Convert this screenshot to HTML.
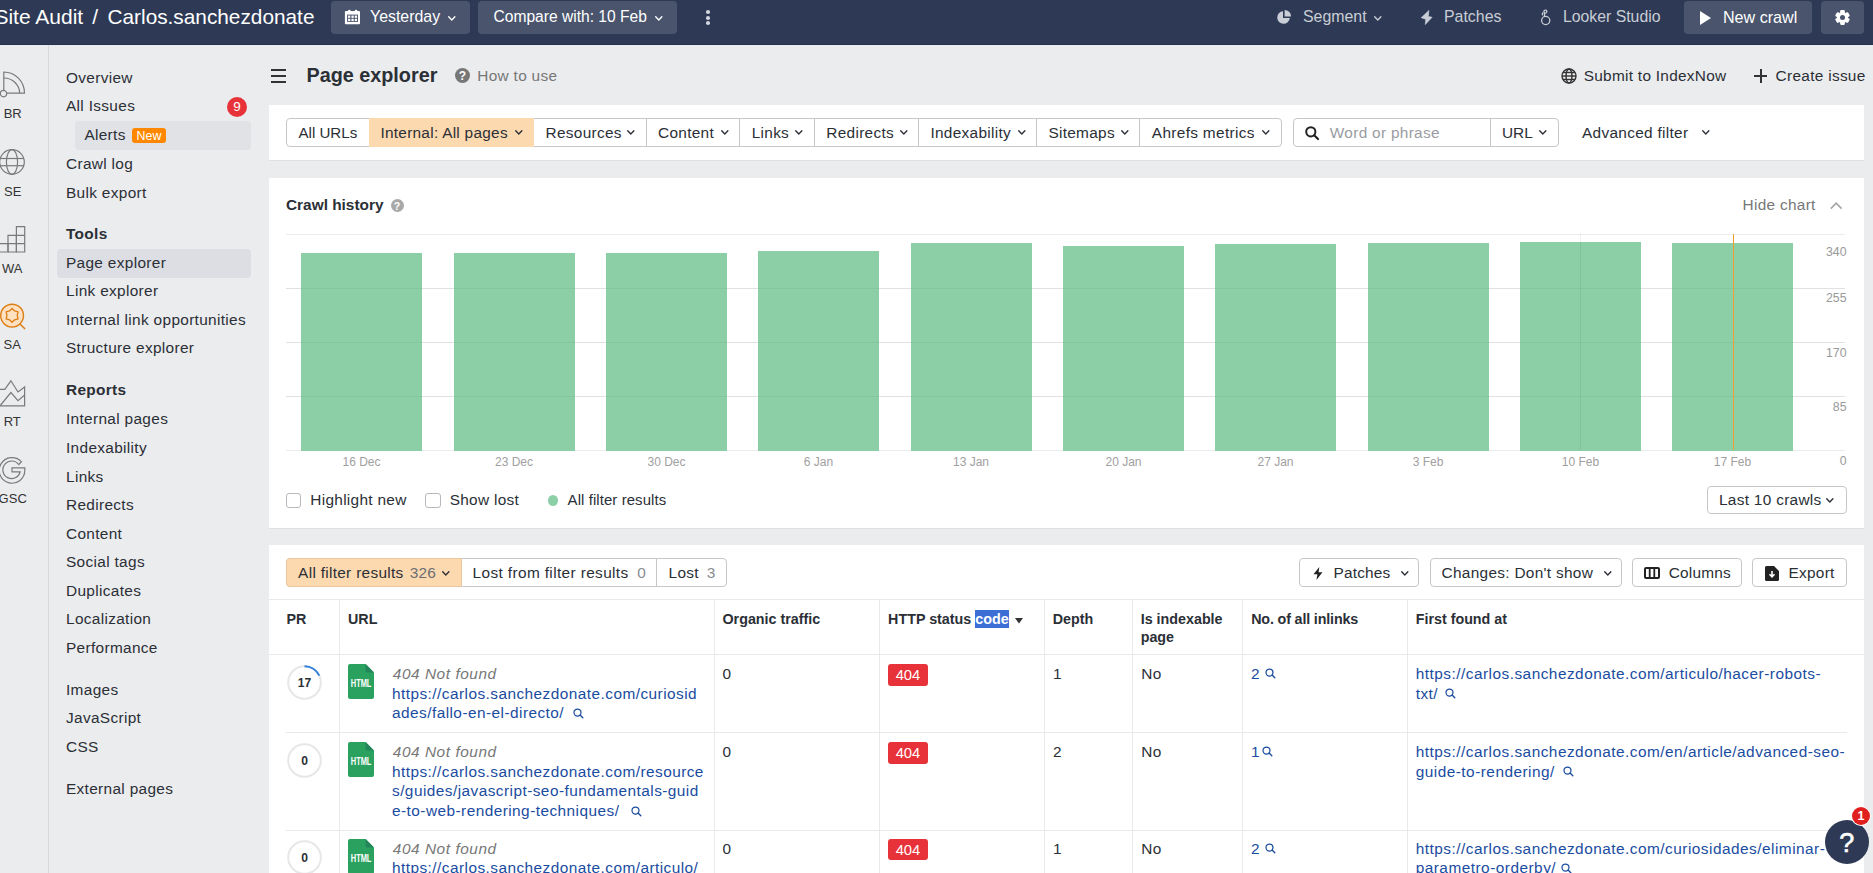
<!DOCTYPE html>
<html><head><meta charset="utf-8"><title>Page explorer</title>
<style>
html,body{margin:0;padding:0;}
body{width:1873px;height:873px;overflow:hidden;position:relative;background:#ebecee;font-family:"Liberation Sans", sans-serif;color:#333;}
.t{position:absolute;white-space:nowrap;}
.r{position:absolute;box-sizing:border-box;}
svg.r{overflow:visible;}
</style></head><body>
<div class="r" style="left:0px;top:0px;width:1873px;height:45px;background:#2e3a55;"></div>
<div class="r" style="left:0px;top:44px;width:1873px;height:1px;background:#263250;"></div>
<div class="t" style="left:-5.60px;top:7.02px;font-size:21px;line-height:20px;color:#fff;">Site Audit</div>
<div class="t" style="left:92.20px;top:7.02px;font-size:21px;line-height:20px;color:#fff;">/</div>
<div class="t" style="left:107.50px;top:7.09px;font-size:20.8px;line-height:20px;color:#fff;">Carlos.sanchezdonate</div>
<div class="r" style="left:331px;top:1px;width:139px;height:33px;background:#4a556d;border-radius:4px;"></div>
<svg class="r" style="left:344px;top:9px;" width="16" height="16" viewBox="0 0 16 16"><rect x="0.9" y="1.9" width="15.1" height="13.4" rx="1" fill="#fff"/><rect x="4.2" y="0.9" width="2.3" height="1.6" fill="#fff"/><rect x="10.9" y="0.9" width="2.3" height="1.6" fill="#fff"/><rect x="3.1" y="5.6" width="10.9" height="7.3" fill="#4a556d"/><rect x="4.05" y="6.55" width="2.3" height="2.3" fill="#fff"/><rect x="4.05" y="9.75" width="2.3" height="2.3" fill="#fff"/><rect x="7.45" y="6.55" width="2.3" height="2.3" fill="#fff"/><rect x="7.45" y="9.75" width="2.3" height="2.3" fill="#fff"/><rect x="10.75" y="6.55" width="2.3" height="2.3" fill="#fff"/><rect x="10.75" y="9.75" width="2.3" height="2.3" fill="#fff"/></svg>
<div class="t" style="left:370.00px;top:6.89px;font-size:15.9px;line-height:20px;color:#fff;">Yesterday</div>
<svg class="r" style="left:448px;top:15.5px;" width="7.6" height="4.712" viewBox="0 0 7.6 4.712"><polyline points="0.7,0.7 3.8,4.012 6.8999999999999995,0.7" fill="none" stroke="#fff" stroke-width="1.35" stroke-linecap="round" stroke-linejoin="round"/></svg>
<div class="r" style="left:478px;top:1px;width:199px;height:33px;background:#4a556d;border-radius:4px;"></div>
<div class="t" style="left:493.50px;top:6.99px;font-size:15.6px;line-height:20px;color:#fff;">Compare with: 10 Feb</div>
<svg class="r" style="left:655px;top:15.5px;" width="7.6" height="4.712" viewBox="0 0 7.6 4.712"><polyline points="0.7,0.7 3.8,4.012 6.8999999999999995,0.7" fill="none" stroke="#fff" stroke-width="1.35" stroke-linecap="round" stroke-linejoin="round"/></svg>
<div class="r" style="left:705.5px;top:9.9px;width:4.5px;height:4.0px;background:#d3d6dd;border-radius:45%;"></div>
<div class="r" style="left:705.5px;top:15.9px;width:4.5px;height:3.9999999999999982px;background:#d3d6dd;border-radius:45%;"></div>
<div class="r" style="left:705.5px;top:21.2px;width:4.5px;height:4.0px;background:#d3d6dd;border-radius:45%;"></div>
<svg class="r" style="left:1276.2px;top:10px;" width="15" height="15" viewBox="0 0 15 15"><path d="M7 1.2 A6.3 6.3 0 1 0 13.8 8 L7 8 Z" fill="#c9cdd6"/><path d="M8.6 0 A6.4 6.4 0 0 1 15 6.4 L8.6 6.4 Z" fill="#c9cdd6"/></svg>
<div class="t" style="left:1303.00px;top:6.89px;font-size:15.9px;line-height:20px;color:#c9cdd6;">Segment</div>
<svg class="r" style="left:1374px;top:15.5px;" width="7.6" height="4.712" viewBox="0 0 7.6 4.712"><polyline points="0.7,0.7 3.8,4.012 6.8999999999999995,0.7" fill="none" stroke="#c9cdd6" stroke-width="1.35" stroke-linecap="round" stroke-linejoin="round"/></svg>
<svg class="r" style="left:1421px;top:10px;" width="12" height="15" viewBox="0 0 12 15"><path d="M7.9 0.4 L0.2 7.7 L4.7 9.2 L4.3 14.6 L11.1 7.3 L7.4 6.4 Z" fill="#c9cdd6" stroke="#c9cdd6" stroke-width="0.6" stroke-linejoin="round"/></svg>
<div class="t" style="left:1444.00px;top:6.89px;font-size:15.9px;line-height:20px;color:#c9cdd6;">Patches</div>
<svg class="r" style="left:1540px;top:9px;" width="11" height="16" viewBox="0 0 11 16"><g fill="none" stroke="#c9cdd6" stroke-width="1.3"><circle cx="5.7" cy="11.5" r="4.1"/><circle cx="5.4" cy="2.6" r="1.5"/><path d="M2.9 6.3 A1.7 1.7 0 0 1 3.2 3.6"/><line x1="4.5" y1="3.9" x2="4.5" y2="7.2"/></g></svg>
<div class="t" style="left:1563.00px;top:6.93px;font-size:15.8px;line-height:20px;color:#c9cdd6;">Looker Studio</div>
<div class="r" style="left:1684px;top:1px;width:128px;height:33px;background:#4a556d;border-radius:4px;"></div>
<svg class="r" style="left:1700px;top:11px;" width="11" height="14" viewBox="0 0 11 14"><path d="M0 0 L11 7 L0 14 Z" fill="#fff"/></svg>
<div class="t" style="left:1723.00px;top:6.82px;font-size:16.1px;line-height:20px;color:#fff;">New crawl</div>
<div class="r" style="left:1821px;top:1px;width:43px;height:33px;background:#4a556d;border-radius:4px;"></div>
<svg class="r" style="left:1834px;top:9px;" width="17" height="17" viewBox="0 0 17 17"><g transform="translate(8.5,8.5) scale(0.9)" fill="#fff"><rect x="-2.6" y="-8.2" width="5.2" height="4.5" rx="1.2" transform="rotate(0)"/><rect x="-2.6" y="-8.2" width="5.2" height="4.5" rx="1.2" transform="rotate(60)"/><rect x="-2.6" y="-8.2" width="5.2" height="4.5" rx="1.2" transform="rotate(120)"/><rect x="-2.6" y="-8.2" width="5.2" height="4.5" rx="1.2" transform="rotate(180)"/><rect x="-2.6" y="-8.2" width="5.2" height="4.5" rx="1.2" transform="rotate(240)"/><rect x="-2.6" y="-8.2" width="5.2" height="4.5" rx="1.2" transform="rotate(300)"/><circle r="6.2"/></g><circle cx="8.5" cy="8.5" r="2.5" fill="#4a556d"/></svg>
<div class="r" style="left:48px;top:45px;width:1px;height:828px;background:#d8d9dc;"></div>
<svg class="r" style="left:0px;top:71px;" width="26" height="27" viewBox="0 0 26 27"><g fill="none" stroke="#7a7a7a" stroke-width="1.2"><path d="M3.8 19.5 V1 A20.7 21.3 0 0 1 24.5 22.2 H6.8"/><path d="M3.8 7 A15.9 15.2 0 0 1 19.7 22.2"/><circle cx="3.5" cy="22.6" r="3.2"/></g></svg>
<div class="t" style="left:-187.30px;width:400px;text-align:center;top:104.10px;font-size:13px;line-height:20px;color:#333;">BR</div>
<svg class="r" style="left:0px;top:149px;" width="25" height="26" viewBox="0 0 25 26"><g fill="none" stroke="#7a7a7a" stroke-width="1.2"><circle cx="12" cy="13" r="12.3"/><ellipse cx="12" cy="13" rx="5.6" ry="12.3"/><line x1="0" y1="9.5" x2="24" y2="9.5"/><line x1="0" y1="16.7" x2="24" y2="16.7"/></g></svg>
<div class="t" style="left:-187.30px;width:400px;text-align:center;top:181.50px;font-size:13px;line-height:20px;color:#333;">SE</div>
<svg class="r" style="left:0px;top:226px;" width="26" height="27" viewBox="0 0 26 27"><g fill="none" stroke="#7a7a7a" stroke-width="1.2"><path d="M-2 17.6 H8 V26 H-2"/><path d="M8 26 V9.3 H16.4 V26 H8 M8 17.6 H16.4"/><path d="M16.4 0.7 H24.7 V26 H16.4 Z M16.4 9.3 H24.7 M16.4 17.6 H24.7"/></g></svg>
<div class="t" style="left:-187.80px;width:400px;text-align:center;top:258.80px;font-size:13px;line-height:20px;color:#333;">WA</div>
<svg class="r" style="left:0px;top:303px;" width="26" height="32" viewBox="0 0 26 32"><circle cx="12.1" cy="12.6" r="11.4" fill="#fde1c0" stroke="#dc7d14" stroke-width="1.4"/><line x1="20.5" y1="21.4" x2="24.6" y2="25.6" stroke="#dc7d14" stroke-width="1.5" stroke-linecap="round"/><path d="M12.10 5.50 L14.65 7.98 L18.08 8.95 L17.20 12.40 L18.08 15.85 L14.65 16.82 L12.10 19.30 L9.55 16.82 L6.12 15.85 L7.00 12.40 L6.12 8.95 L9.55 7.98 Z" fill="none" stroke="#dc7d14" stroke-width="1.3" stroke-linejoin="round"/></svg>
<div class="t" style="left:-187.80px;width:400px;text-align:center;top:335.10px;font-size:13px;line-height:20px;color:#333;">SA</div>
<svg class="r" style="left:0px;top:380px;" width="26" height="27" viewBox="0 0 26 27"><g fill="none" stroke="#7a7a7a" stroke-width="1.2"><path d="M-2 9.3 H4.8 L10.9 0.8 L18 12 L24.6 7 V25.8 H-2"/><path d="M0 25.8 L10.9 12.5 L18 20.6 L24.6 15"/></g></svg>
<div class="t" style="left:-187.80px;width:400px;text-align:center;top:412.20px;font-size:13px;line-height:20px;color:#333;">RT</div>
<svg class="r" style="left:0px;top:457px;" width="26" height="27" viewBox="0 0 26 27"><path d="M21.5 4.8 A12.8 12.8 0 1 0 24.8 13.5 V10.8 H12 V14.9 H20.2 A8.8 8.8 0 1 1 18.7 7.5 Z" fill="none" stroke="#7a7a7a" stroke-width="1.2"/></svg>
<div class="t" style="left:-187.30px;width:400px;text-align:center;top:489.00px;font-size:13px;line-height:20px;color:#333;">GSC</div>
<div class="r" style="left:75px;top:121px;width:176px;height:29px;background:#e0e2e6;border-radius:4px;"></div>
<div class="r" style="left:57px;top:249px;width:194px;height:28.5px;background:#dcdee3;border-radius:4px;"></div>
<div class="t" style="left:66.00px;top:67.56px;font-size:15.4px;line-height:20px;color:#2b2f36;letter-spacing:0.33px;">Overview</div>
<div class="t" style="left:66.00px;top:95.96px;font-size:15.4px;line-height:20px;color:#2b2f36;letter-spacing:0.33px;">All Issues</div>
<div class="t" style="left:84.40px;top:125.46px;font-size:15.4px;line-height:20px;color:#2b2f36;letter-spacing:0.33px;">Alerts</div>
<div class="t" style="left:66.00px;top:153.56px;font-size:15.4px;line-height:20px;color:#2b2f36;letter-spacing:0.33px;">Crawl log</div>
<div class="t" style="left:66.00px;top:182.76px;font-size:15.4px;line-height:20px;color:#2b2f36;letter-spacing:0.33px;">Bulk export</div>
<div class="t" style="left:66.00px;top:224.36px;font-size:15.4px;line-height:20px;color:#2b2f36;letter-spacing:0.33px;"><b>Tools</b></div>
<div class="t" style="left:66.00px;top:252.66px;font-size:15.4px;line-height:20px;color:#2b2f36;letter-spacing:0.33px;">Page explorer</div>
<div class="t" style="left:66.00px;top:281.36px;font-size:15.4px;line-height:20px;color:#2b2f36;letter-spacing:0.33px;">Link explorer</div>
<div class="t" style="left:66.00px;top:309.66px;font-size:15.4px;line-height:20px;color:#2b2f36;letter-spacing:0.33px;">Internal link opportunities</div>
<div class="t" style="left:66.00px;top:337.96px;font-size:15.4px;line-height:20px;color:#2b2f36;letter-spacing:0.33px;">Structure explorer</div>
<div class="t" style="left:66.00px;top:380.36px;font-size:15.4px;line-height:20px;color:#2b2f36;letter-spacing:0.33px;"><b>Reports</b></div>
<div class="t" style="left:66.00px;top:408.76px;font-size:15.4px;line-height:20px;color:#2b2f36;letter-spacing:0.33px;">Internal pages</div>
<div class="t" style="left:66.00px;top:437.66px;font-size:15.4px;line-height:20px;color:#2b2f36;letter-spacing:0.33px;">Indexability</div>
<div class="t" style="left:66.00px;top:466.56px;font-size:15.4px;line-height:20px;color:#2b2f36;letter-spacing:0.33px;">Links</div>
<div class="t" style="left:66.00px;top:494.66px;font-size:15.4px;line-height:20px;color:#2b2f36;letter-spacing:0.33px;">Redirects</div>
<div class="t" style="left:66.00px;top:523.56px;font-size:15.4px;line-height:20px;color:#2b2f36;letter-spacing:0.33px;">Content</div>
<div class="t" style="left:66.00px;top:551.96px;font-size:15.4px;line-height:20px;color:#2b2f36;letter-spacing:0.33px;">Social tags</div>
<div class="t" style="left:66.00px;top:580.56px;font-size:15.4px;line-height:20px;color:#2b2f36;letter-spacing:0.33px;">Duplicates</div>
<div class="t" style="left:66.00px;top:609.16px;font-size:15.4px;line-height:20px;color:#2b2f36;letter-spacing:0.33px;">Localization</div>
<div class="t" style="left:66.00px;top:637.76px;font-size:15.4px;line-height:20px;color:#2b2f36;letter-spacing:0.33px;">Performance</div>
<div class="t" style="left:66.00px;top:679.56px;font-size:15.4px;line-height:20px;color:#2b2f36;letter-spacing:0.33px;">Images</div>
<div class="t" style="left:66.00px;top:708.16px;font-size:15.4px;line-height:20px;color:#2b2f36;letter-spacing:0.33px;">JavaScript</div>
<div class="t" style="left:66.00px;top:736.76px;font-size:15.4px;line-height:20px;color:#2b2f36;letter-spacing:0.33px;">CSS</div>
<div class="t" style="left:66.00px;top:778.66px;font-size:15.4px;line-height:20px;color:#2b2f36;letter-spacing:0.33px;">External pages</div>
<div class="r" style="left:227px;top:97px;width:20px;height:20px;background:#e8323a;border-radius:50%;"></div>
<div class="t" style="left:37.00px;width:400px;text-align:center;top:96.82px;font-size:13.5px;line-height:20px;color:#fff;">9</div>
<div class="r" style="left:132px;top:128px;width:34px;height:15px;background:#ff8800;border-radius:3px;"></div>
<div class="t" style="left:-51.00px;width:400px;text-align:center;top:125.70px;font-size:12.4px;line-height:20px;color:#fff;">New</div>
<div class="r" style="left:271px;top:68.5px;width:15px;height:2.5px;background:#333;"></div>
<div class="r" style="left:271px;top:74.5px;width:15px;height:2.5px;background:#333;"></div>
<div class="r" style="left:271px;top:80.5px;width:15px;height:2.5px;background:#333;"></div>
<div class="t" style="left:306.50px;top:65.44px;font-size:19.8px;line-height:20px;color:#2b2f36;font-weight:700;">Page explorer</div>
<div class="r" style="left:455px;top:68px;width:15px;height:15px;background:#777;border-radius:50%;"></div>
<div class="t" style="left:262.50px;width:400px;text-align:center;top:66.34px;font-size:12px;line-height:20px;color:#fff;font-weight:700;">?</div>
<div class="t" style="left:477.30px;top:65.76px;font-size:15.4px;line-height:20px;color:#777;letter-spacing:0.3px;">How to use</div>
<svg class="r" style="left:1561px;top:68px;" width="16" height="16" viewBox="0 0 16 16"><g fill="none" stroke="#333" stroke-width="1.4"><circle cx="8" cy="8" r="7"/><ellipse cx="8" cy="8" rx="3" ry="7"/><line x1="1" y1="8" x2="15" y2="8"/><line x1="2" y1="4.5" x2="14" y2="4.5"/><line x1="2" y1="11.5" x2="14" y2="11.5"/></g></svg>
<div class="t" style="left:1583.70px;top:66.16px;font-size:15.4px;line-height:20px;color:#2b2f36;letter-spacing:0.28px;">Submit to IndexNow</div>
<div class="r" style="left:1754px;top:74.8px;width:13.299999999999955px;height:2.0px;background:#333;"></div>
<div class="r" style="left:1759.7px;top:69px;width:2.0px;height:13.5px;background:#333;"></div>
<div class="t" style="left:1775.60px;top:66.16px;font-size:15.4px;line-height:20px;color:#2b2f36;letter-spacing:0.3px;">Create issue</div>
<div class="r" style="left:269px;top:105px;width:1595px;height:55px;background:#fff;box-shadow:0 1px 0 #dfe0e3;"></div>
<div class="r" style="left:286px;top:118px;width:996px;height:29px;border:1px solid #c6c7ca;border-radius:4px;background:#fff;"></div>
<div class="r" style="left:368.5px;top:118px;width:165.20000000000005px;height:29px;background:#fdd9b0;"></div>
<div class="r" style="left:645.6px;top:118px;width:1.0px;height:29px;background:#c6c7ca;"></div>
<div class="r" style="left:739px;top:118px;width:1px;height:29px;background:#c6c7ca;"></div>
<div class="r" style="left:814px;top:118px;width:1px;height:29px;background:#c6c7ca;"></div>
<div class="r" style="left:918px;top:118px;width:1px;height:29px;background:#c6c7ca;"></div>
<div class="r" style="left:1036px;top:118px;width:1px;height:29px;background:#c6c7ca;"></div>
<div class="r" style="left:1139px;top:118px;width:1px;height:29px;background:#c6c7ca;"></div>
<div class="t" style="left:298.50px;top:123.17px;font-size:15.1px;line-height:20px;color:#2b2f36;">All URLs</div>
<div class="t" style="left:380.40px;top:123.06px;font-size:15.4px;line-height:20px;color:#2b2f36;letter-spacing:0.27px;">Internal: All pages</div>
<svg class="r" style="left:515px;top:130.3px;" width="7.6" height="4.712" viewBox="0 0 7.6 4.712"><polyline points="0.7,0.7 3.8,4.012 6.8999999999999995,0.7" fill="none" stroke="#2b2f36" stroke-width="1.35" stroke-linecap="round" stroke-linejoin="round"/></svg>
<div class="t" style="left:545.60px;top:123.06px;font-size:15.4px;line-height:20px;color:#2b2f36;letter-spacing:0.3px;">Resources</div>
<svg class="r" style="left:627px;top:130.3px;" width="7.6" height="4.712" viewBox="0 0 7.6 4.712"><polyline points="0.7,0.7 3.8,4.012 6.8999999999999995,0.7" fill="none" stroke="#2b2f36" stroke-width="1.35" stroke-linecap="round" stroke-linejoin="round"/></svg>
<div class="t" style="left:658.00px;top:123.06px;font-size:15.4px;line-height:20px;color:#2b2f36;letter-spacing:0.3px;">Content</div>
<svg class="r" style="left:721px;top:130.3px;" width="7.6" height="4.712" viewBox="0 0 7.6 4.712"><polyline points="0.7,0.7 3.8,4.012 6.8999999999999995,0.7" fill="none" stroke="#2b2f36" stroke-width="1.35" stroke-linecap="round" stroke-linejoin="round"/></svg>
<div class="t" style="left:751.70px;top:123.06px;font-size:15.4px;line-height:20px;color:#2b2f36;letter-spacing:0.3px;">Links</div>
<svg class="r" style="left:795px;top:130.3px;" width="7.6" height="4.712" viewBox="0 0 7.6 4.712"><polyline points="0.7,0.7 3.8,4.012 6.8999999999999995,0.7" fill="none" stroke="#2b2f36" stroke-width="1.35" stroke-linecap="round" stroke-linejoin="round"/></svg>
<div class="t" style="left:826.30px;top:123.06px;font-size:15.4px;line-height:20px;color:#2b2f36;letter-spacing:0.3px;">Redirects</div>
<svg class="r" style="left:899.5px;top:130.3px;" width="7.6" height="4.712" viewBox="0 0 7.6 4.712"><polyline points="0.7,0.7 3.8,4.012 6.8999999999999995,0.7" fill="none" stroke="#2b2f36" stroke-width="1.35" stroke-linecap="round" stroke-linejoin="round"/></svg>
<div class="t" style="left:930.40px;top:123.06px;font-size:15.4px;line-height:20px;color:#2b2f36;letter-spacing:0.3px;">Indexability</div>
<svg class="r" style="left:1018px;top:130.3px;" width="7.6" height="4.712" viewBox="0 0 7.6 4.712"><polyline points="0.7,0.7 3.8,4.012 6.8999999999999995,0.7" fill="none" stroke="#2b2f36" stroke-width="1.35" stroke-linecap="round" stroke-linejoin="round"/></svg>
<div class="t" style="left:1048.40px;top:123.06px;font-size:15.4px;line-height:20px;color:#2b2f36;letter-spacing:0.3px;">Sitemaps</div>
<svg class="r" style="left:1121px;top:130.3px;" width="7.6" height="4.712" viewBox="0 0 7.6 4.712"><polyline points="0.7,0.7 3.8,4.012 6.8999999999999995,0.7" fill="none" stroke="#2b2f36" stroke-width="1.35" stroke-linecap="round" stroke-linejoin="round"/></svg>
<div class="t" style="left:1151.80px;top:123.06px;font-size:15.4px;line-height:20px;color:#2b2f36;letter-spacing:0.33px;">Ahrefs metrics</div>
<svg class="r" style="left:1262px;top:130.3px;" width="7.6" height="4.712" viewBox="0 0 7.6 4.712"><polyline points="0.7,0.7 3.8,4.012 6.8999999999999995,0.7" fill="none" stroke="#2b2f36" stroke-width="1.35" stroke-linecap="round" stroke-linejoin="round"/></svg>
<div class="r" style="left:1293px;top:118px;width:266px;height:29px;border:1px solid #c6c7ca;border-radius:4px;background:#fff;"></div>
<div class="r" style="left:1490px;top:118px;width:1px;height:29px;background:#c6c7ca;"></div>
<svg class="r" style="left:1305px;top:126px;" width="14" height="14" viewBox="0 0 14 14"><circle cx="5.8" cy="5.8" r="4.6" fill="none" stroke="#222" stroke-width="2"/><line x1="9.2" y1="9.2" x2="13" y2="13" stroke="#222" stroke-width="2.2" stroke-linecap="round"/></svg>
<div class="t" style="left:1329.80px;top:123.06px;font-size:15.4px;line-height:20px;color:#9a9ca1;letter-spacing:0.3px;">Word or phrase</div>
<div class="t" style="left:1502.00px;top:123.06px;font-size:15.4px;line-height:20px;color:#2b2f36;">URL</div>
<svg class="r" style="left:1539px;top:130.3px;" width="7.6" height="4.712" viewBox="0 0 7.6 4.712"><polyline points="0.7,0.7 3.8,4.012 6.8999999999999995,0.7" fill="none" stroke="#2b2f36" stroke-width="1.35" stroke-linecap="round" stroke-linejoin="round"/></svg>
<div class="t" style="left:1582.00px;top:123.06px;font-size:15.4px;line-height:20px;color:#2b2f36;letter-spacing:0.3px;">Advanced filter</div>
<svg class="r" style="left:1701.5px;top:130.3px;" width="7.6" height="4.712" viewBox="0 0 7.6 4.712"><polyline points="0.7,0.7 3.8,4.012 6.8999999999999995,0.7" fill="none" stroke="#2b2f36" stroke-width="1.35" stroke-linecap="round" stroke-linejoin="round"/></svg>
<div class="r" style="left:269px;top:178px;width:1595px;height:350px;background:#fff;box-shadow:0 1px 0 #dfe0e3;"></div>
<div class="t" style="left:286.00px;top:194.96px;font-size:15.4px;line-height:20px;color:#2b2f36;font-weight:700;">Crawl history</div>
<div class="r" style="left:390.5px;top:198.8px;width:13.0px;height:13.0px;background:#a8a8a8;border-radius:50%;"></div>
<div class="t" style="left:197.00px;width:400px;text-align:center;top:195.66px;font-size:10.5px;line-height:20px;color:#fff;font-weight:700;">?</div>
<div class="t" style="right:57.30px;top:194.96px;font-size:15.4px;line-height:20px;color:#777;letter-spacing:0.3px;">Hide chart</div>
<svg class="r" style="left:1830.4px;top:201.5px;" width="12.4" height="7.2" viewBox="0 0 12.4 7.2"><polyline points="0.8,6.6 6.2,1.2 11.6,6.6" fill="none" stroke="#a5a5a5" stroke-width="1.6"/></svg>
<div class="r" style="left:286px;top:234px;width:1559px;height:1px;background:#ececec;"></div>
<div class="r" style="left:286px;top:288px;width:1559px;height:1px;background:#ececec;"></div>
<div class="r" style="left:286px;top:342px;width:1559px;height:1px;background:#ececec;"></div>
<div class="r" style="left:286px;top:396px;width:1559px;height:1px;background:#ececec;"></div>
<div class="r" style="left:286px;top:450px;width:1559px;height:1px;background:#ececec;"></div>
<div class="r" style="left:301px;top:253px;width:121px;height:198px;background:#8ccfa7;"></div>
<div class="r" style="left:453.5px;top:252.5px;width:121.0px;height:198.5px;background:#8ccfa7;"></div>
<div class="r" style="left:606px;top:252.5px;width:121px;height:198.5px;background:#8ccfa7;"></div>
<div class="r" style="left:758px;top:251.2px;width:121px;height:199.8px;background:#8ccfa7;"></div>
<div class="r" style="left:910.5px;top:243px;width:121.0px;height:208px;background:#8ccfa7;"></div>
<div class="r" style="left:1063px;top:246px;width:121px;height:205px;background:#8ccfa7;"></div>
<div class="r" style="left:1215px;top:244px;width:121px;height:207px;background:#8ccfa7;"></div>
<div class="r" style="left:1367.5px;top:243px;width:121.0px;height:208px;background:#8ccfa7;"></div>
<div class="r" style="left:1520px;top:242.2px;width:121px;height:208.8px;background:#8ccfa7;"></div>
<div class="r" style="left:1672px;top:243px;width:121px;height:208px;background:#8ccfa7;"></div>
<div class="r" style="left:286px;top:288px;width:1559px;height:1px;background:rgba(0,0,0,0.045);"></div>
<div class="r" style="left:286px;top:342px;width:1559px;height:1px;background:rgba(0,0,0,0.045);"></div>
<div class="r" style="left:286px;top:396px;width:1559px;height:1px;background:rgba(0,0,0,0.045);"></div>
<div class="r" style="left:1580px;top:234px;width:1px;height:216px;background:rgba(0,0,0,0.06);"></div>
<div class="r" style="left:1732.5px;top:234px;width:1.5px;height:216px;background:#f0a030;"></div>
<div class="t" style="left:161.50px;width:400px;text-align:center;top:451.84px;font-size:12px;line-height:20px;color:#a0a0a0;">16 Dec</div>
<div class="t" style="left:314.00px;width:400px;text-align:center;top:451.84px;font-size:12px;line-height:20px;color:#a0a0a0;">23 Dec</div>
<div class="t" style="left:466.50px;width:400px;text-align:center;top:451.84px;font-size:12px;line-height:20px;color:#a0a0a0;">30 Dec</div>
<div class="t" style="left:618.50px;width:400px;text-align:center;top:451.84px;font-size:12px;line-height:20px;color:#a0a0a0;">6 Jan</div>
<div class="t" style="left:771.00px;width:400px;text-align:center;top:451.84px;font-size:12px;line-height:20px;color:#a0a0a0;">13 Jan</div>
<div class="t" style="left:923.50px;width:400px;text-align:center;top:451.84px;font-size:12px;line-height:20px;color:#a0a0a0;">20 Jan</div>
<div class="t" style="left:1075.50px;width:400px;text-align:center;top:451.84px;font-size:12px;line-height:20px;color:#a0a0a0;">27 Jan</div>
<div class="t" style="left:1228.00px;width:400px;text-align:center;top:451.84px;font-size:12px;line-height:20px;color:#a0a0a0;">3 Feb</div>
<div class="t" style="left:1380.50px;width:400px;text-align:center;top:451.84px;font-size:12px;line-height:20px;color:#a0a0a0;">10 Feb</div>
<div class="t" style="left:1532.50px;width:400px;text-align:center;top:451.84px;font-size:12px;line-height:20px;color:#a0a0a0;">17 Feb</div>
<div class="t" style="right:26.50px;top:241.74px;font-size:12.3px;line-height:20px;color:#999;">340</div>
<div class="t" style="right:26.50px;top:287.74px;font-size:12.3px;line-height:20px;color:#999;">255</div>
<div class="t" style="right:26.50px;top:342.74px;font-size:12.3px;line-height:20px;color:#999;">170</div>
<div class="t" style="right:26.50px;top:396.74px;font-size:12.3px;line-height:20px;color:#999;">85</div>
<div class="t" style="right:26.50px;top:451.24px;font-size:12.3px;line-height:20px;color:#999;">0</div>
<div class="r" style="left:286px;top:492.5px;width:15px;height:15.0px;border:1px solid #b5b8bd;border-radius:3px;background:#fff;"></div>
<div class="t" style="left:310.30px;top:489.66px;font-size:15.4px;line-height:20px;color:#2b2f36;letter-spacing:0.3px;">Highlight new</div>
<div class="r" style="left:425px;top:492.5px;width:15.5px;height:15.0px;border:1px solid #b5b8bd;border-radius:3px;background:#fff;"></div>
<div class="t" style="left:449.70px;top:489.66px;font-size:15.4px;line-height:20px;color:#2b2f36;letter-spacing:0.3px;">Show lost</div>
<div class="r" style="left:548px;top:495px;width:10px;height:10.5px;background:#8ccfa7;border-radius:50%;"></div>
<div class="t" style="left:567.60px;top:489.84px;font-size:14.9px;line-height:20px;color:#2b2f36;letter-spacing:0.1px;">All filter results</div>
<div class="r" style="left:1707px;top:486px;width:140px;height:28px;border:1px solid #c6c7ca;border-radius:4px;background:#fff;"></div>
<div class="t" style="left:1719.00px;top:489.66px;font-size:15.4px;line-height:20px;color:#2b2f36;letter-spacing:0.3px;">Last 10 crawls</div>
<svg class="r" style="left:1826px;top:497.5px;" width="7.6" height="4.712" viewBox="0 0 7.6 4.712"><polyline points="0.7,0.7 3.8,4.012 6.8999999999999995,0.7" fill="none" stroke="#2b2f36" stroke-width="1.35" stroke-linecap="round" stroke-linejoin="round"/></svg>
<div class="r" style="left:269px;top:545px;width:1595px;height:328px;background:#fff;"></div>
<div class="r" style="left:286px;top:558px;width:441px;height:29px;border:1px solid #c6c7ca;border-radius:4px;background:#fff;"></div>
<div class="r" style="left:286px;top:558px;width:176px;height:29px;background:#fdd9b0;border-radius:4px 0 0 4px;border:1px solid #ebc79f;"></div>
<div class="r" style="left:656px;top:558px;width:1px;height:29px;background:#c6c7ca;"></div>
<div class="t" style="left:298.10px;top:562.96px;font-size:15.4px;line-height:20px;color:#2b2f36;letter-spacing:0.3px;">All filter results</div>
<div class="t" style="left:409.70px;top:562.96px;font-size:15.4px;line-height:20px;color:#6b6e73;letter-spacing:0.2px;">326</div>
<svg class="r" style="left:442px;top:570.5px;" width="7.6" height="4.712" viewBox="0 0 7.6 4.712"><polyline points="0.7,0.7 3.8,4.012 6.8999999999999995,0.7" fill="none" stroke="#2b2f36" stroke-width="1.35" stroke-linecap="round" stroke-linejoin="round"/></svg>
<div class="t" style="left:472.60px;top:562.96px;font-size:15.4px;line-height:20px;color:#2b2f36;letter-spacing:0.37px;">Lost from filter results</div>
<div class="t" style="left:637.20px;top:562.96px;font-size:15.4px;line-height:20px;color:#8a8d92;">0</div>
<div class="t" style="left:668.60px;top:562.96px;font-size:15.4px;line-height:20px;color:#2b2f36;letter-spacing:0.3px;">Lost</div>
<div class="t" style="left:706.80px;top:562.96px;font-size:15.4px;line-height:20px;color:#8a8d92;">3</div>
<div class="r" style="left:1299.3px;top:558px;width:120.20000000000005px;height:29px;border:1px solid #c6c7ca;border-radius:4px;"></div>
<svg class="r" style="left:1313px;top:566.5px;" width="10" height="13" viewBox="0 0 10 13"><path d="M6.3 0 L0.5 7.3 L4.4 7.3 L3.4 13 L9.5 5.3 L5.6 5.3 Z" fill="#222"/></svg>
<div class="t" style="left:1333.60px;top:562.96px;font-size:15.4px;line-height:20px;color:#2b2f36;letter-spacing:0.15px;">Patches</div>
<svg class="r" style="left:1400.5px;top:570.5px;" width="7.6" height="4.712" viewBox="0 0 7.6 4.712"><polyline points="0.7,0.7 3.8,4.012 6.8999999999999995,0.7" fill="none" stroke="#2b2f36" stroke-width="1.35" stroke-linecap="round" stroke-linejoin="round"/></svg>
<div class="r" style="left:1429.5px;top:558px;width:192.9000000000001px;height:29px;border:1px solid #c6c7ca;border-radius:4px;"></div>
<div class="t" style="left:1441.60px;top:562.96px;font-size:15.4px;line-height:20px;color:#2b2f36;letter-spacing:0.3px;">Changes: Don&#39;t show</div>
<svg class="r" style="left:1603.5px;top:570.5px;" width="7.6" height="4.712" viewBox="0 0 7.6 4.712"><polyline points="0.7,0.7 3.8,4.012 6.8999999999999995,0.7" fill="none" stroke="#2b2f36" stroke-width="1.35" stroke-linecap="round" stroke-linejoin="round"/></svg>
<div class="r" style="left:1632.4px;top:558px;width:109.89999999999986px;height:29px;border:1px solid #c6c7ca;border-radius:4px;"></div>
<svg class="r" style="left:1644px;top:567px;" width="16" height="12" viewBox="0 0 16 12"><rect x="1" y="1" width="14" height="10" rx="1" fill="none" stroke="#222" stroke-width="2"/><line x1="5.7" y1="1" x2="5.7" y2="11" stroke="#222" stroke-width="1.8"/><line x1="10.3" y1="1" x2="10.3" y2="11" stroke="#222" stroke-width="1.8"/></svg>
<div class="t" style="left:1668.80px;top:562.96px;font-size:15.4px;line-height:20px;color:#2b2f36;letter-spacing:0.2px;">Columns</div>
<div class="r" style="left:1752.3px;top:558px;width:94.29999999999995px;height:29px;border:1px solid #c6c7ca;border-radius:4px;"></div>
<svg class="r" style="left:1765px;top:565.5px;" width="14" height="15" viewBox="0 0 14 15"><path d="M1.5 0 H9 L14 5 V13.5 A1.5 1.5 0 0 1 12.5 15 H1.5 A1.5 1.5 0 0 1 0 13.5 V1.5 A1.5 1.5 0 0 1 1.5 0 Z" fill="#222"/><path d="M7 5 V10.5 M4.5 8.3 L7 10.8 L9.5 8.3" fill="none" stroke="#fff" stroke-width="1.6"/></svg>
<div class="t" style="left:1788.60px;top:562.96px;font-size:15.4px;line-height:20px;color:#2b2f36;letter-spacing:0.25px;">Export</div>
<div class="r" style="left:269px;top:599px;width:1595px;height:1px;background:#e8e9eb;"></div>
<div class="r" style="left:269px;top:654px;width:1595px;height:1px;background:#e8e9eb;"></div>
<div class="r" style="left:286px;top:732px;width:1561px;height:1px;background:#e8e9eb;"></div>
<div class="r" style="left:286px;top:830px;width:1561px;height:1px;background:#e8e9eb;"></div>
<div class="r" style="left:339px;top:600px;width:1px;height:273px;background:#e8e9eb;"></div>
<div class="r" style="left:714px;top:600px;width:1px;height:273px;background:#e8e9eb;"></div>
<div class="r" style="left:879px;top:600px;width:1px;height:273px;background:#e8e9eb;"></div>
<div class="r" style="left:1044px;top:600px;width:1px;height:273px;background:#e8e9eb;"></div>
<div class="r" style="left:1132px;top:600px;width:1px;height:273px;background:#e8e9eb;"></div>
<div class="r" style="left:1242px;top:600px;width:1px;height:273px;background:#e8e9eb;"></div>
<div class="r" style="left:1407px;top:600px;width:1px;height:273px;background:#e8e9eb;"></div>
<div class="t" style="left:286.50px;top:609.35px;font-size:14.3px;line-height:20px;color:#2b2f36;font-weight:700;">PR</div>
<div class="t" style="left:348.00px;top:609.35px;font-size:14.3px;line-height:20px;color:#2b2f36;font-weight:700;">URL</div>
<div class="t" style="left:722.50px;top:609.35px;font-size:14.3px;line-height:20px;color:#2b2f36;font-weight:700;">Organic traffic</div>
<div class="r" style="left:975.2px;top:610px;width:33.799999999999955px;height:18px;background:#3b6fd6;"></div>
<div class="t" style="left:888.10px;top:609.35px;font-size:14.3px;line-height:20px;color:#2b2f36;font-weight:700;">HTTP status <span style="color:#fff">code</span></div>
<svg class="r" style="left:1014.5px;top:618px;" width="8" height="5.5" viewBox="0 0 8 5.5"><path d="M0 0 H8 L4 5.5 Z" fill="#333"/></svg>
<div class="t" style="left:1052.80px;top:609.35px;font-size:14.3px;line-height:20px;color:#2b2f36;font-weight:700;">Depth</div>
<div class="t" style="left:1140.70px;top:609.35px;font-size:14.3px;line-height:20px;color:#2b2f36;font-weight:700;">Is indexable</div>
<div class="t" style="left:1140.70px;top:626.65px;font-size:14.3px;line-height:20px;color:#2b2f36;font-weight:700;">page</div>
<div class="t" style="left:1251.20px;top:609.35px;font-size:14.3px;line-height:20px;color:#2b2f36;font-weight:700;letter-spacing:-0.15px;">No. of all inlinks</div>
<div class="t" style="left:1415.70px;top:609.35px;font-size:14.3px;line-height:20px;color:#2b2f36;font-weight:700;">First found at</div>
<svg class="r" style="left:287px;top:665.2px;" width="35" height="35" viewBox="0 0 35 35"><circle cx="17.5" cy="17.5" r="16.3" fill="none" stroke="#e6e7e9" stroke-width="2"/><path d="M17.5 1.2 A16.3 16.3 0 0 1 32.3 10.6" fill="none" stroke="#2f80d8" stroke-width="2"/></svg>
<div class="t" style="left:104.60px;width:400px;text-align:center;top:673.11px;font-size:12.1px;line-height:20px;color:#2b2f36;font-weight:700;">17</div>
<svg class="r" style="left:348px;top:664.2px;" width="26" height="35" viewBox="0 0 26 35"><path d="M2 0 H17.6 L26 8.4 V33 A2 2 0 0 1 24 35 H2 A2 2 0 0 1 0 33 V2 A2 2 0 0 1 2 0 Z" fill="#2ba160"/><path d="M17.6 0 L26 8.4 H19.2 A1.6 1.6 0 0 1 17.6 6.8 Z" fill="#23855a"/><text x="2.8" y="23.3" font-family="Liberation Sans" font-weight="700" font-size="10.8" fill="#fff" textLength="20.6" lengthAdjust="spacingAndGlyphs">HTML</text></svg>
<div class="t" style="left:392.80px;top:663.76px;font-size:15.4px;line-height:20px;color:#777;letter-spacing:0.55px;font-style:italic;">404 Not found</div>
<div class="t" style="left:392.00px;top:683.56px;font-size:15.4px;line-height:20px;color:#1a4c9f;letter-spacing:0.45px;">https://carlos.sanchezdonate.com/curiosid</div>
<div class="t" style="left:392.00px;top:703.36px;font-size:15.4px;line-height:20px;color:#1a4c9f;letter-spacing:0.45px;">ades/fallo-en-el-directo/</div>
<svg class="r" style="left:573.3px;top:708.0px;" width="11" height="11" viewBox="0 0 11 11"><circle cx="4.5" cy="4.5" r="3.5" fill="none" stroke="#1a4c9f" stroke-width="1.25"/><line x1="7.1" y1="7.1" x2="9.8" y2="9.8" stroke="#1a4c9f" stroke-width="1.4" stroke-linecap="round"/></svg>
<div class="t" style="left:722.50px;top:663.76px;font-size:15.4px;line-height:20px;color:#2b2f36;">0</div>
<div class="r" style="left:888px;top:664.2px;width:40px;height:21.399999999999977px;background:#e8323a;border-radius:3px;"></div>
<div class="t" style="left:708.00px;width:400px;text-align:center;top:664.67px;font-size:14.8px;line-height:20px;color:#fff;">404</div>
<div class="t" style="left:1052.90px;top:663.76px;font-size:15.4px;line-height:20px;color:#2b2f36;">1</div>
<div class="t" style="left:1141.30px;top:663.76px;font-size:15.4px;line-height:20px;color:#2b2f36;letter-spacing:0.3px;">No</div>
<div class="t" style="left:1251.00px;top:663.76px;font-size:15.4px;line-height:20px;color:#1a4c9f;">2</div>
<svg class="r" style="left:1265.3px;top:668.4px;" width="11" height="11" viewBox="0 0 11 11"><circle cx="4.5" cy="4.5" r="3.5" fill="none" stroke="#1a4c9f" stroke-width="1.25"/><line x1="7.1" y1="7.1" x2="9.8" y2="9.8" stroke="#1a4c9f" stroke-width="1.4" stroke-linecap="round"/></svg>
<div class="t" style="left:1415.70px;top:663.76px;font-size:15.4px;line-height:20px;color:#1a4c9f;letter-spacing:0.48px;">https://carlos.sanchezdonate.com/articulo/hacer-robots-</div>
<div class="t" style="left:1415.70px;top:683.56px;font-size:15.4px;line-height:20px;color:#1a4c9f;letter-spacing:0.48px;">txt/</div>
<svg class="r" style="left:1445px;top:688.1999999999999px;" width="11" height="11" viewBox="0 0 11 11"><circle cx="4.5" cy="4.5" r="3.5" fill="none" stroke="#1a4c9f" stroke-width="1.25"/><line x1="7.1" y1="7.1" x2="9.8" y2="9.8" stroke="#1a4c9f" stroke-width="1.4" stroke-linecap="round"/></svg>
<svg class="r" style="left:287px;top:743.2px;" width="35" height="35" viewBox="0 0 35 35"><circle cx="17.5" cy="17.5" r="16.3" fill="none" stroke="#e6e7e9" stroke-width="2"/></svg>
<div class="t" style="left:104.60px;width:400px;text-align:center;top:751.11px;font-size:12.1px;line-height:20px;color:#2b2f36;font-weight:700;">0</div>
<svg class="r" style="left:348px;top:742.2px;" width="26" height="35" viewBox="0 0 26 35"><path d="M2 0 H17.6 L26 8.4 V33 A2 2 0 0 1 24 35 H2 A2 2 0 0 1 0 33 V2 A2 2 0 0 1 2 0 Z" fill="#2ba160"/><path d="M17.6 0 L26 8.4 H19.2 A1.6 1.6 0 0 1 17.6 6.8 Z" fill="#23855a"/><text x="2.8" y="23.3" font-family="Liberation Sans" font-weight="700" font-size="10.8" fill="#fff" textLength="20.6" lengthAdjust="spacingAndGlyphs">HTML</text></svg>
<div class="t" style="left:392.80px;top:741.76px;font-size:15.4px;line-height:20px;color:#777;letter-spacing:0.55px;font-style:italic;">404 Not found</div>
<div class="t" style="left:392.00px;top:761.56px;font-size:15.4px;line-height:20px;color:#1a4c9f;letter-spacing:0.45px;">https://carlos.sanchezdonate.com/resource</div>
<div class="t" style="left:392.00px;top:781.36px;font-size:15.4px;line-height:20px;color:#1a4c9f;letter-spacing:0.45px;">s/guides/javascript-seo-fundamentals-guid</div>
<div class="t" style="left:392.00px;top:801.16px;font-size:15.4px;line-height:20px;color:#1a4c9f;letter-spacing:0.45px;">e-to-web-rendering-techniques/</div>
<svg class="r" style="left:631px;top:805.8px;" width="11" height="11" viewBox="0 0 11 11"><circle cx="4.5" cy="4.5" r="3.5" fill="none" stroke="#1a4c9f" stroke-width="1.25"/><line x1="7.1" y1="7.1" x2="9.8" y2="9.8" stroke="#1a4c9f" stroke-width="1.4" stroke-linecap="round"/></svg>
<div class="t" style="left:722.50px;top:741.76px;font-size:15.4px;line-height:20px;color:#2b2f36;">0</div>
<div class="r" style="left:888px;top:742.2px;width:40px;height:21.399999999999977px;background:#e8323a;border-radius:3px;"></div>
<div class="t" style="left:708.00px;width:400px;text-align:center;top:742.67px;font-size:14.8px;line-height:20px;color:#fff;">404</div>
<div class="t" style="left:1052.90px;top:741.76px;font-size:15.4px;line-height:20px;color:#2b2f36;">2</div>
<div class="t" style="left:1141.30px;top:741.76px;font-size:15.4px;line-height:20px;color:#2b2f36;letter-spacing:0.3px;">No</div>
<div class="t" style="left:1251.00px;top:741.76px;font-size:15.4px;line-height:20px;color:#1a4c9f;">1</div>
<svg class="r" style="left:1262px;top:746.4px;" width="11" height="11" viewBox="0 0 11 11"><circle cx="4.5" cy="4.5" r="3.5" fill="none" stroke="#1a4c9f" stroke-width="1.25"/><line x1="7.1" y1="7.1" x2="9.8" y2="9.8" stroke="#1a4c9f" stroke-width="1.4" stroke-linecap="round"/></svg>
<div class="t" style="left:1415.70px;top:741.76px;font-size:15.4px;line-height:20px;color:#1a4c9f;letter-spacing:0.48px;">https://carlos.sanchezdonate.com/en/article/advanced-seo-</div>
<div class="t" style="left:1415.70px;top:761.56px;font-size:15.4px;line-height:20px;color:#1a4c9f;letter-spacing:0.48px;">guide-to-rendering/</div>
<svg class="r" style="left:1562.5px;top:766.1999999999999px;" width="11" height="11" viewBox="0 0 11 11"><circle cx="4.5" cy="4.5" r="3.5" fill="none" stroke="#1a4c9f" stroke-width="1.25"/><line x1="7.1" y1="7.1" x2="9.8" y2="9.8" stroke="#1a4c9f" stroke-width="1.4" stroke-linecap="round"/></svg>
<svg class="r" style="left:287px;top:840.1px;" width="35" height="35" viewBox="0 0 35 35"><circle cx="17.5" cy="17.5" r="16.3" fill="none" stroke="#e6e7e9" stroke-width="2"/></svg>
<div class="t" style="left:104.60px;width:400px;text-align:center;top:848.01px;font-size:12.1px;line-height:20px;color:#2b2f36;font-weight:700;">0</div>
<svg class="r" style="left:348px;top:839.1px;" width="26" height="35" viewBox="0 0 26 35"><path d="M2 0 H17.6 L26 8.4 V33 A2 2 0 0 1 24 35 H2 A2 2 0 0 1 0 33 V2 A2 2 0 0 1 2 0 Z" fill="#2ba160"/><path d="M17.6 0 L26 8.4 H19.2 A1.6 1.6 0 0 1 17.6 6.8 Z" fill="#23855a"/><text x="2.8" y="23.3" font-family="Liberation Sans" font-weight="700" font-size="10.8" fill="#fff" textLength="20.6" lengthAdjust="spacingAndGlyphs">HTML</text></svg>
<div class="t" style="left:392.80px;top:838.66px;font-size:15.4px;line-height:20px;color:#777;letter-spacing:0.55px;font-style:italic;">404 Not found</div>
<div class="t" style="left:392.00px;top:858.46px;font-size:15.4px;line-height:20px;color:#1a4c9f;letter-spacing:0.45px;">https://carlos.sanchezdonate.com/articulo/</div>
<div class="t" style="left:722.50px;top:838.66px;font-size:15.4px;line-height:20px;color:#2b2f36;">0</div>
<div class="r" style="left:888px;top:839.1px;width:40px;height:21.399999999999977px;background:#e8323a;border-radius:3px;"></div>
<div class="t" style="left:708.00px;width:400px;text-align:center;top:839.57px;font-size:14.8px;line-height:20px;color:#fff;">404</div>
<div class="t" style="left:1052.90px;top:838.66px;font-size:15.4px;line-height:20px;color:#2b2f36;">1</div>
<div class="t" style="left:1141.30px;top:838.66px;font-size:15.4px;line-height:20px;color:#2b2f36;letter-spacing:0.3px;">No</div>
<div class="t" style="left:1251.00px;top:838.66px;font-size:15.4px;line-height:20px;color:#1a4c9f;">2</div>
<svg class="r" style="left:1265.3px;top:843.3px;" width="11" height="11" viewBox="0 0 11 11"><circle cx="4.5" cy="4.5" r="3.5" fill="none" stroke="#1a4c9f" stroke-width="1.25"/><line x1="7.1" y1="7.1" x2="9.8" y2="9.8" stroke="#1a4c9f" stroke-width="1.4" stroke-linecap="round"/></svg>
<div class="t" style="left:1415.70px;top:838.66px;font-size:15.4px;line-height:20px;color:#1a4c9f;letter-spacing:0.48px;">https://carlos.sanchezdonate.com/curiosidades/eliminar-</div>
<div class="t" style="left:1415.70px;top:858.46px;font-size:15.4px;line-height:20px;color:#1a4c9f;letter-spacing:0.48px;">parametro-orderby/</div>
<svg class="r" style="left:1561px;top:863.0999999999999px;" width="11" height="11" viewBox="0 0 11 11"><circle cx="4.5" cy="4.5" r="3.5" fill="none" stroke="#1a4c9f" stroke-width="1.25"/><line x1="7.1" y1="7.1" x2="9.8" y2="9.8" stroke="#1a4c9f" stroke-width="1.4" stroke-linecap="round"/></svg>
<div class="r" style="left:1824.6px;top:819.6px;width:44.0px;height:44.0px;background:#2e3a55;border-radius:50%;"></div>
<div class="t" style="left:1646.80px;width:400px;text-align:center;top:832.94px;font-size:27px;line-height:20px;color:#fff;-webkit-text-stroke:0.6px #fff;">?</div>
<div class="r" style="left:1851.8px;top:806.7px;width:18.0px;height:18.0px;background:#e0201f;border-radius:50%;box-shadow:0 0 0 1px #fff;"></div>
<div class="t" style="left:1660.90px;width:400px;text-align:center;top:806.27px;font-size:12.5px;line-height:20px;color:#fff;font-weight:700;">1</div>
</body></html>
